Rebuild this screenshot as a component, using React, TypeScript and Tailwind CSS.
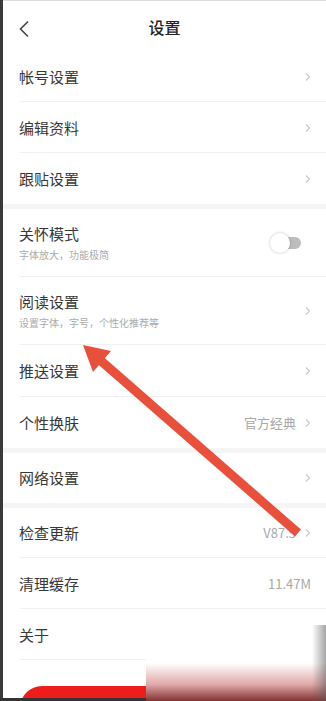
import React from "react";

const Chevron = () => (
  <svg width="6" height="10" viewBox="0 0 6 10" className="shrink-0">
    <polyline points="1,1.5 4.5,5 1,8.5" fill="none" stroke="#c8c8c8" strokeWidth="1.1" />
  </svg>
);

type RowProps = {
  title: string;
  sub?: string;
  right?: React.ReactNode;
  chevron?: boolean;
  h: string;
  sep?: boolean;
};

const Row = ({ title, sub, right, chevron = true, h, sep = true }: RowProps) => (
  <div className={`relative shrink-0 flex items-center pl-[16px] pr-[15px] ${h}`}>
    <div className="flex-1 flex flex-col">
      <div className="text-[15px] leading-[20px] text-[#383838]">{title}</div>
      {sub && <div className="mt-[3px] text-[10px] leading-[16px] text-[#ababab]">{sub}</div>}
    </div>
    <div className="flex items-center gap-[9px]">
      {right}
      {chevron && <Chevron />}
    </div>
    {sep && <div className="absolute bottom-0 left-[17px] right-0 h-px bg-[#f0f0f0]" />}
  </div>
);

const Band = () => <div className="h-[5px] shrink-0 bg-[#f5f5f5]" />;

export default function App() {
  return (
    <div
      className="relative w-[326px] h-[701px] overflow-hidden bg-white flex flex-col"
      style={{ fontFamily: '"Noto Sans CJK SC", "Noto Sans", sans-serif' }}
    >
      <div className="flex flex-1 min-h-0">
        <div className="w-[3px] bg-[#3a3a3a] shrink-0" />
        <div className="flex-1 flex flex-col min-h-0 overflow-hidden">
          <div className="h-[2px] shrink-0 border-t border-[#dcdcdc]" />
          {/* header */}
          <div className="relative shrink-0 h-[50px] flex items-center justify-center">
            <svg width="12" height="18" viewBox="0 0 12 18" className="absolute left-[15px] top-[18px]">
              <polyline points="10,1.5 2.5,9 10,16.5" fill="none" stroke="#444" strokeWidth="1.6" />
            </svg>
            <div className="text-[16px] font-medium text-[#222] -mt-[1px]">设置</div>
          </div>
          <Row title="帐号设置" h="h-[50px]" />
          <Row title="编辑资料" h="h-[51px]" />
          <Row title="跟贴设置" h="h-[51px]" sep={false} />
          <Band />
          <Row
            title="关怀模式"
            sub="字体放大，功能极简"
            h="h-[68px]"
            chevron={false}
            right={
              <div className="relative w-[31px] h-[20px] mr-[10px]">
                <div className="absolute right-0 top-[4px] w-[24px] h-[12px] rounded-full bg-[#bdbdbd]" />
                <div className="absolute left-0 top-0 w-[20px] h-[20px] rounded-full bg-white shadow-[0_0_3px_rgba(0,0,0,0.25)]" />
              </div>
            }
          />
          <Row title="阅读设置" sub="设置字体，字号，个性化推荐等" h="h-[68px]" />
          <Row title="推送设置" h="h-[52px]" />
          <Row
            title="个性换肤"
            h="h-[51px]"
            sep={false}
            right={<span className="text-[13px] text-[#a8a8a8]">官方经典</span>}
          />
          <Band />
          <Row title="网络设置" h="h-[50px]" sep={false} />
          <Band />
          <Row title="检查更新" h="h-[50px]" right={<span className="text-[13px] text-[#a8a8a8]">V87.5</span>} />
          <Row
            title="清理缓存"
            h="h-[51px]"
            chevron={false}
            right={<span className="text-[13px] text-[#a8a8a8]">11.47M</span>}
          />
          <Row title="关于" h="h-[51px]" chevron={false} />
          <div className="shrink-0 pt-[26px] px-[17px]">
            <div className="h-[44px] rounded-full bg-[#ec1d1b]" />
          </div>
        </div>
      </div>
      <div className="h-[3px] bg-[#333] shrink-0" />

      {/* red annotation arrow */}
      <svg className="absolute left-0 top-0 pointer-events-none" width="326" height="701" viewBox="0 0 326 701">
        <line x1="100" y1="360" x2="298" y2="533" stroke="#e9503c" strokeWidth="9" />
        <polygon points="83,345 93,372 111,351" fill="#e9503c" />
      </svg>

      {/* watermark blur */}
      <div
        className="absolute left-[146px] top-[625px] w-[180px] h-[76px] pointer-events-none"
        style={{
          background:
            "linear-gradient(to bottom, rgba(255,255,255,1) 0%, rgba(255,255,255,1) 50%, rgba(225,170,170,1) 78%, rgba(130,50,50,1) 100%)",
        }}
      >
        <div
          className="absolute right-0 top-0 h-full w-[14px]"
          style={{ background: "linear-gradient(to right, rgba(0,0,0,0), rgba(90,90,90,0.55))" }}
        />
      </div>
    </div>
  );
}
